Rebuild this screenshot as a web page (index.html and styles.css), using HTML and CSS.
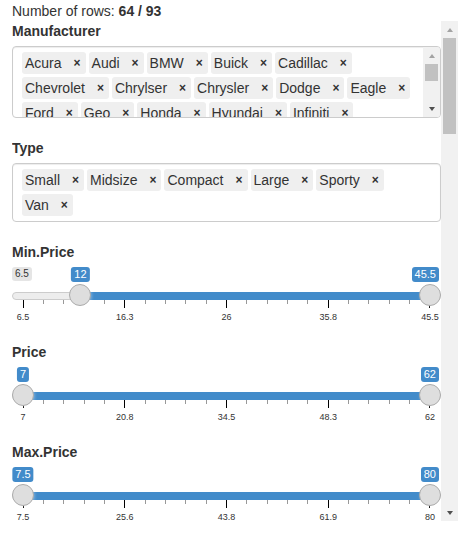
FILE: index.html
```html
<!DOCTYPE html>
<html lang="en">
<head>
<meta charset="utf-8">
<title>Cars93 filters</title>
<link rel="stylesheet" href="styles.css">
</head>
<body>
<div class="rows">Number of rows: <strong>64 / 93</strong></div>
<div class="panel">
  <div class="panel-body">

    <div class="select-filter">
      <label class="control-label">Manufacturer</label>
      <div class="select-box scroll">
        <div class="chips">
          <div class="chip">Acura<span class="remove">×</span></div>
          <div class="chip">Audi<span class="remove">×</span></div>
          <div class="chip">BMW<span class="remove">×</span></div>
          <div class="chip">Buick<span class="remove">×</span></div>
          <div class="chip">Cadillac<span class="remove">×</span></div>
          <div class="chip">Chevrolet<span class="remove">×</span></div>
          <div class="chip">Chrylser<span class="remove">×</span></div>
          <div class="chip">Chrysler<span class="remove">×</span></div>
          <div class="chip">Dodge<span class="remove">×</span></div>
          <div class="chip">Eagle<span class="remove">×</span></div>
          <div class="chip">Ford<span class="remove">×</span></div>
          <div class="chip">Geo<span class="remove">×</span></div>
          <div class="chip">Honda<span class="remove">×</span></div>
          <div class="chip">Hyundai<span class="remove">×</span></div>
          <div class="chip">Infiniti<span class="remove">×</span></div>
          <div class="chip">Lexus<span class="remove">×</span></div>
          <div class="chip">Lincoln<span class="remove">×</span></div>
          <div class="chip">Mazda<span class="remove">×</span></div>
          <div class="chip">Mercedes-Benz<span class="remove">×</span></div>
          <div class="chip">Mercury<span class="remove">×</span></div>
          <div class="chip">Mitsubishi<span class="remove">×</span></div>
          <div class="chip">Nissan<span class="remove">×</span></div>
          <div class="chip">Oldsmobile<span class="remove">×</span></div>
          <div class="chip">Plymouth<span class="remove">×</span></div>
          <div class="chip">Pontiac<span class="remove">×</span></div>
          <div class="chip">Saab<span class="remove">×</span></div>
          <div class="chip">Saturn<span class="remove">×</span></div>
          <div class="chip">Subaru<span class="remove">×</span></div>
          <div class="chip">Suzuki<span class="remove">×</span></div>
          <div class="chip">Toyota<span class="remove">×</span></div>
          <div class="chip">Volkswagen<span class="remove">×</span></div>
          <div class="chip">Volvo<span class="remove">×</span></div>
        </div>
        <div class="vscroll small" aria-hidden="true">
          <span class="sb-btn"><span class="arrow-up"></span></span>
          <span class="sb-track"><span class="sb-thumb"></span></span>
          <span class="sb-btn"><span class="arrow-down"></span></span>
        </div>
      </div>
    </div>

    <div class="select-filter">
      <label class="control-label">Type</label>
      <div class="select-box">
        <div class="chips">
          <div class="chip">Small<span class="remove">×</span></div>
          <div class="chip">Midsize<span class="remove">×</span></div>
          <div class="chip">Compact<span class="remove">×</span></div>
          <div class="chip">Large<span class="remove">×</span></div>
          <div class="chip">Sporty<span class="remove">×</span></div>
          <div class="chip">Van<span class="remove">×</span></div>
        </div>
      </div>
    </div>

    <div class="slider-filter">
      <label class="control-label">Min.Price</label>
      <div class="irs">
        <div class="irs-top">
          <span class="irs-line"></span>
          <span class="irs-bar" style="left:68.4px;right:11px"></span>
          <span class="irs-min">6.5</span>
          <span class="irs-tag" style="left:68.4px">12</span>
          <span class="irs-tag at-max">45.5</span>
          <span class="irs-handle" style="left:57.4px"></span>
          <span class="irs-handle at-max"></span>
        </div>
        <div class="irs-grid">
          <div class="ticks"><i></i><i></i><i></i><i></i><i></i><i></i><i></i><i></i><i></i><i></i><i></i><i></i><i></i><i></i><i></i><i></i><i></i><i></i><i></i><i></i><i></i></div>
          <div class="grid-text"><span>6.5</span><span>16.3</span><span>26</span><span>35.8</span><span>45.5</span></div>
        </div>
      </div>
    </div>

    <div class="slider-filter">
      <label class="control-label">Price</label>
      <div class="irs">
        <div class="irs-top">
          <span class="irs-line"></span>
          <span class="irs-bar full"></span>
          <span class="irs-tag at-min">7</span>
          <span class="irs-tag at-max">62</span>
          <span class="irs-handle at-min"></span>
          <span class="irs-handle at-max"></span>
        </div>
        <div class="irs-grid">
          <div class="ticks"><i></i><i></i><i></i><i></i><i></i><i></i><i></i><i></i><i></i><i></i><i></i><i></i><i></i><i></i><i></i><i></i><i></i><i></i><i></i><i></i><i></i></div>
          <div class="grid-text"><span>7</span><span>20.8</span><span>34.5</span><span>48.3</span><span>62</span></div>
        </div>
      </div>
    </div>

    <div class="slider-filter">
      <label class="control-label">Max.Price</label>
      <div class="irs">
        <div class="irs-top">
          <span class="irs-line"></span>
          <span class="irs-bar full"></span>
          <span class="irs-tag at-min">7.5</span>
          <span class="irs-tag at-max">80</span>
          <span class="irs-handle at-min"></span>
          <span class="irs-handle at-max"></span>
        </div>
        <div class="irs-grid">
          <div class="ticks"><i></i><i></i><i></i><i></i><i></i><i></i><i></i><i></i><i></i><i></i><i></i><i></i><i></i><i></i><i></i><i></i><i></i><i></i><i></i><i></i><i></i></div>
          <div class="grid-text"><span>7.5</span><span>25.6</span><span>43.8</span><span>61.9</span><span>80</span></div>
        </div>
      </div>
    </div>

  </div>
  <div class="vscroll page" aria-hidden="true">
    <span class="sb-btn"><span class="arrow-up"></span></span>
    <span class="sb-track"><span class="sb-thumb"></span></span>
    <span class="sb-btn"><span class="arrow-down"></span></span>
  </div>
</div>
</body>
</html>
```
FILE: styles.css
```css
* {
  box-sizing: border-box;
}

html,
body {
  margin: 0;
  padding: 0;
  background: #ffffff;
}

body {
  font-family: "Liberation Sans", Arial, Helvetica, sans-serif;
  font-size: 14px;
  line-height: 20px;
  color: #333333;
}

.rows {
  height: 21px;
  padding: 1px 0 0 12px;
}

.rows strong {
  font-weight: 700;
}

/* scrolling filter panel */
.panel {
  display: flex;
  width: 458px;
  height: 500px;
  padding-left: 12px;
}

.panel-body {
  width: 429px;
  height: 100%;
  overflow: hidden;
}

/* classic scrollbar look */
.vscroll {
  display: flex;
  flex-direction: column;
  flex: 0 0 17px;
  width: 17px;
  background: #f1f1f1;
}

.sb-btn {
  display: flex;
  align-items: center;
  justify-content: center;
  height: 17px;
  flex: 0 0 17px;
}

.sb-track {
  flex: 1;
  padding: 0 2px;
}

.sb-thumb {
  display: block;
  background: #c1c1c1;
}

.vscroll.page .sb-thumb {
  height: 96px;
}

.vscroll.small .sb-thumb {
  height: 17px;
}

.arrow-up {
  width: 0;
  height: 0;
  border-left: 3.5px solid transparent;
  border-right: 3.5px solid transparent;
  border-bottom: 4px solid #a3a3a3;
}

.arrow-down {
  width: 0;
  height: 0;
  border-left: 3.5px solid transparent;
  border-right: 3.5px solid transparent;
  border-top: 4px solid #505050;
}

.select-filter {
  margin-bottom: 20px;
}

.slider-filter {
  margin-bottom: 15px;
}

.control-label {
  display: block;
  font-weight: 700;
  margin-bottom: 5px;
}

/* selectize-like multi select */
.select-box {
  display: flex;
  border: 1px solid #cccccc;
  border-radius: 4px;
  background: #ffffff;
  box-shadow: inset 0 1px 1px rgba(0, 0, 0, 0.075);
}

.chips {
  flex: 1;
  display: flex;
  flex-wrap: wrap;
  align-content: flex-start;
  gap: 3px;
  padding: 5px 9px;
  min-width: 0;
}

.select-box.scroll {
  height: 72px;
  overflow: hidden;
}

.select-box.scroll .chips {
  padding-right: 6px;
  overflow: hidden;
}

.chip {
  display: flex;
  padding: 1px 0 1px 3px;
  background: #efefef;
  color: #333333;
  border-radius: 3px;
  line-height: 20px;
  white-space: nowrap;
}

.chip .remove {
  width: 17px;
  margin-left: 7px;
  text-align: center;
  font-size: 12px;
  font-weight: 700;
  color: #333333;
}

/* ion.rangeSlider (shiny skin) */
.irs {
  display: flex;
  flex-direction: column;
  height: 60px;
}

.irs-top {
  position: relative;
  height: 33px;
}

.irs-line {
  position: absolute;
  top: 25px;
  left: 0;
  right: 0;
  height: 8px;
  border: 1px solid #cccccc;
  border-radius: 8px;
  background: #ededed;
}

.irs-bar {
  position: absolute;
  top: 25px;
  height: 8px;
  background: #428bca;
}

.irs-bar.full {
  left: 11px;
  right: 11px;
}

.irs-handle {
  position: absolute;
  top: 17px;
  width: 22px;
  height: 22px;
  border: 1px solid #ababab;
  border-radius: 50%;
  background: #dedede;
  box-shadow: 1px 1px 3px rgba(255, 255, 255, 0.3);
  z-index: 2;
}

.irs-handle.at-min {
  left: 0;
}

.irs-handle.at-max {
  right: 0;
}

.irs-min {
  position: absolute;
  top: 0;
  left: 0;
  padding: 1px 3px;
  font-size: 10px;
  line-height: 11.5px;
  color: #333333;
  background: rgba(0, 0, 0, 0.1);
  border-radius: 3px;
}

.irs-tag {
  position: absolute;
  top: 0;
  padding: 1px 3px;
  font-size: 11px;
  line-height: 12.5px;
  color: #ffffff;
  background: #428bca;
  border-radius: 3px;
  white-space: nowrap;
  transform: translateX(-50%);
}

.irs-tag.at-min {
  left: 11px;
  transform: translateX(max(-50%, -11px));
}

.irs-tag.at-max {
  right: 2px;
  transform: none;
}

.irs-grid {
  height: 27px;
  width: 408px;
  margin-left: 10.6px;
}

.ticks {
  display: flex;
  justify-content: space-between;
  align-items: flex-start;
  height: 8px;
}

.ticks i {
  display: block;
  width: 1px;
  height: 4px;
  background: #999999;
}

.ticks i:nth-child(5n+1) {
  height: 8px;
  background: #000000;
}

.grid-text {
  display: flex;
  justify-content: space-between;
  margin-top: 5px;
  font-size: 9px;
  line-height: 9px;
  color: #333333;
}

.grid-text span {
  display: flex;
  justify-content: center;
  width: 1px;
  white-space: nowrap;
}
```
